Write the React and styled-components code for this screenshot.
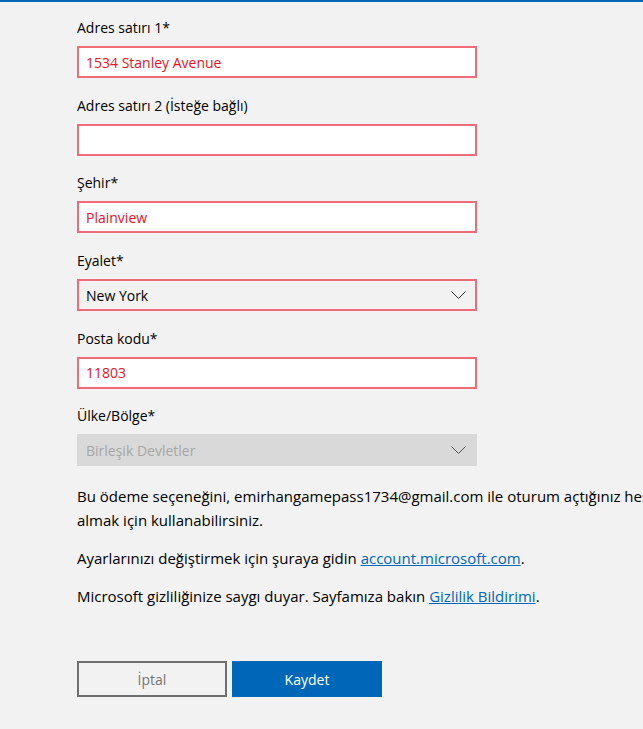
import React from "react";
import styled, { createGlobalStyle } from "styled-components";

const Global = createGlobalStyle`
  html, body {
    margin: 0;
    padding: 0;
    background: #f2f2f2;
    overflow-x: hidden;
  }
  body {
    font-family: "Open Sans", "Noto Sans", "Liberation Sans", sans-serif;
    font-size: 14px;
    color: #000;
  }
  * { box-sizing: border-box; }
`;

const Page = styled.div`
  border-top: 2px solid #0067b8;
  min-height: 729px;
  padding: 16px 0 0 77px;
`;

const Form = styled.div`
  width: 835px;
`;

const Field = styled.div`
  width: 400px;
  margin-bottom: 17.7px;
`;

const Label = styled.label`
  display: block;
  line-height: 20px;
  height: 20px;
  margin-bottom: 8px;
  font-size: 14px;
  color: #000;
`;

const TextBox = styled.div`
  height: 32px;
  border: 2px solid #ed6c78;
  background: #fff;
  padding: 0 7px;
  display: flex;
  align-items: center;
  font-size: 14px;
  color: #e81123;
`;

const SelectBox = styled.div`
  height: 32px;
  border: 2px solid ${(p) => (p.$disabled ? "#d9d9d9" : "#ed6c78")};
  background: ${(p) => (p.$disabled ? "#d9d9d9" : "#f2f2f2")};
  padding: 0 9px 0 7px;
  display: flex;
  align-items: center;
  justify-content: space-between;
  font-size: 14px;
  color: ${(p) => (p.$disabled ? "#a6a6a6" : "#000")};
`;

const Chevron = styled.svg`
  width: 15px;
  height: 8px;
  flex: none;
`;

const Para = styled.p`
  margin: 0 0 14px;
  line-height: 24px;
  font-size: 15px;
`;

const Link = styled.a`
  color: #0067b8;
  text-decoration: underline;
`;

const Buttons = styled.div`
  display: flex;
  gap: 5px;
  margin-top: 53px;
`;

const Button = styled.button`
  width: 150px;
  height: 36px;
  font-family: inherit;
  font-size: 14px;
  border: 2px solid ${(p) => (p.$primary ? "#0067b8" : "#6e6e6e")};
  background: ${(p) => (p.$primary ? "#0067b8" : "#f2f2f2")};
  color: ${(p) => (p.$primary ? "#fff" : "#767676")};
  padding: 0;
  cursor: pointer;
`;

function Select({ value, disabled }) {
  return (
    <SelectBox $disabled={disabled}>
      <span>{value}</span>
      <Chevron viewBox="0 0 15 8">
        <path d="M0.5 0.5 L7.5 7.5 L14.5 0.5" fill="none" stroke={disabled ? "#555" : "#333"} strokeWidth="1" />
      </Chevron>
    </SelectBox>
  );
}

export default function App() {
  return (
    <>
      <Global />
      <Page>
        <Form>
          <Field>
            <Label>Adres satırı 1*</Label>
            <TextBox>1534 Stanley Avenue</TextBox>
          </Field>
          <Field>
            <Label>Adres satırı 2 (İsteğe bağlı)</Label>
            <TextBox />
          </Field>
          <Field>
            <Label>Şehir*</Label>
            <TextBox>Plainview</TextBox>
          </Field>
          <Field>
            <Label>Eyalet*</Label>
            <Select value="New York" />
          </Field>
          <Field>
            <Label>Posta kodu*</Label>
            <TextBox>11803</TextBox>
          </Field>
          <Field>
            <Label>Ülke/Bölge*</Label>
            <Select value="Birleşik Devletler" disabled />
          </Field>
          <Para>
            Bu ödeme seçeneğini, emirhangamepass1734@gmail.com ile oturum açtığınız hesapla Microsoft'tan ürün satın
            <br />
            almak için kullanabilirsiniz.
          </Para>
          <Para>
            Ayarlarınızı değiştirmek için şuraya gidin <Link href="#">account.microsoft.com</Link>.
          </Para>
          <Para>
            Microsoft gizliliğinize saygı duyar. Sayfamıza bakın <Link href="#">Gizlilik Bildirimi</Link>.
          </Para>
          <Buttons>
            <Button>İptal</Button>
            <Button $primary>Kaydet</Button>
          </Buttons>
        </Form>
      </Page>
    </>
  );
}
